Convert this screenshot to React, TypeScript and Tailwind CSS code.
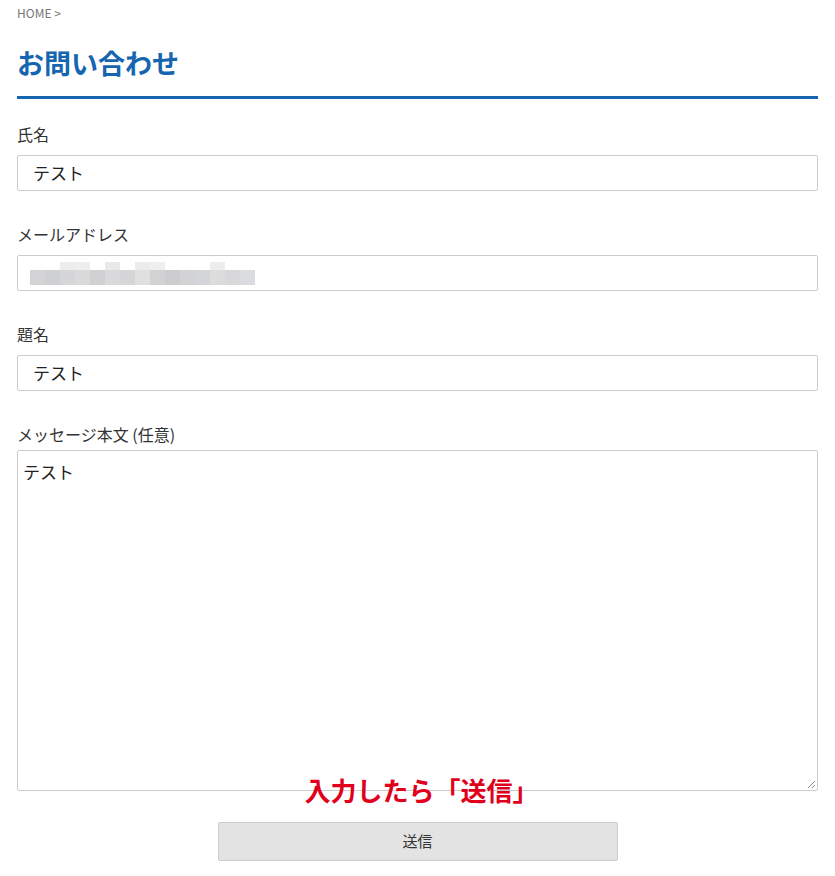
import React from "react";

const font = { fontFamily: '"Noto Sans CJK JP", "Noto Sans", sans-serif' };

const mosaicMain = [
  "#d4d4d6", "#cfd0d3", "#d6d6d8", "#dadadb", "#d1d1d3", "#d9d9db", "#d6d6d8", "#e0e0e0",
  "#d2d2d4", "#cdcdcf", "#d3d3d5", "#d4d5d9", "#dcdcdc", "#d8d8da", "#dadce0",
];

const mosaicTop = [
  "", "", "#ededed", "#eeeeee", "", "#e9e9ea", "", "#ececec", "#efefef", "", "", "", "#ededee", "", "",
];

function Label({ text }: { text: string }) {
  return <div className="text-[16px] leading-[22px] text-[#333]">{text}</div>;
}

function TextInput({ value }: { value: string }) {
  return (
    <div className="flex h-[36px] items-center rounded-[2px] border border-[#cccccc] bg-white px-[15px] text-[17px] text-[#222]">
      {value}
    </div>
  );
}

export default function App() {
  return (
    <div className="min-h-[876px] bg-white px-[17px]" style={font}>
      <div className="pt-[5px] text-[12px] leading-[16px] text-[#777]">HOME &gt;</div>

      <h1 className="mt-[24px] border-b-[3px] border-[#1565b0] pb-[16px] text-[27px] font-bold leading-[35px] text-[#1565b0]">
        お問い合わせ
      </h1>

      <div className="mt-[24px]">
        <Label text="氏名" />
        <div className="mt-[10px]">
          <TextInput value="テスト" />
        </div>
      </div>

      <div className="mt-[32px]">
        <Label text="メールアドレス" />
        <div className="mt-[10px] flex h-[36px] flex-col justify-center rounded-[2px] border border-[#cccccc] bg-white pl-[12px]">
          <div className="flex h-[8px]">
            {mosaicTop.map((c, i) => (
              <div key={i} className="h-full w-[15px]" style={{ background: c || "transparent" }} />
            ))}
          </div>
          <div className="flex h-[15px]">
            {mosaicMain.map((c, i) => (
              <div key={i} className="h-full w-[15px]" style={{ background: c }} />
            ))}
          </div>
        </div>
      </div>

      <div className="mt-[32px]">
        <Label text="題名" />
        <div className="mt-[10px]">
          <TextInput value="テスト" />
        </div>
      </div>

      <div className="mt-[32px]">
        <Label text="メッセージ本文 (任意)" />
        <div className="relative mt-[5px] h-[341px] rounded-[2px] border border-[#cccccc] bg-white px-[5px] py-[8px] text-[17px] leading-[26px] text-[#222]">
          テスト
          <svg className="absolute bottom-[1px] right-[1px]" width="10" height="10" viewBox="0 0 10 10">
            <path d="M9 2 L2 9 M9 6 L6 9" stroke="#888" strokeWidth="1" />
          </svg>
          <div className="absolute bottom-[-18px] left-0 right-0 pl-[8px] text-center text-[26px] font-bold leading-[36px] text-[#e0001b]">
            入力したら「送信」
          </div>
        </div>
      </div>

      <button className="mx-auto mt-[31px] flex h-[39px] w-[400px] items-center justify-center rounded-[2px] border border-[#cccccc] bg-[#e3e3e3] text-[15px] text-[#333]">
        送信
      </button>
    </div>
  );
}
